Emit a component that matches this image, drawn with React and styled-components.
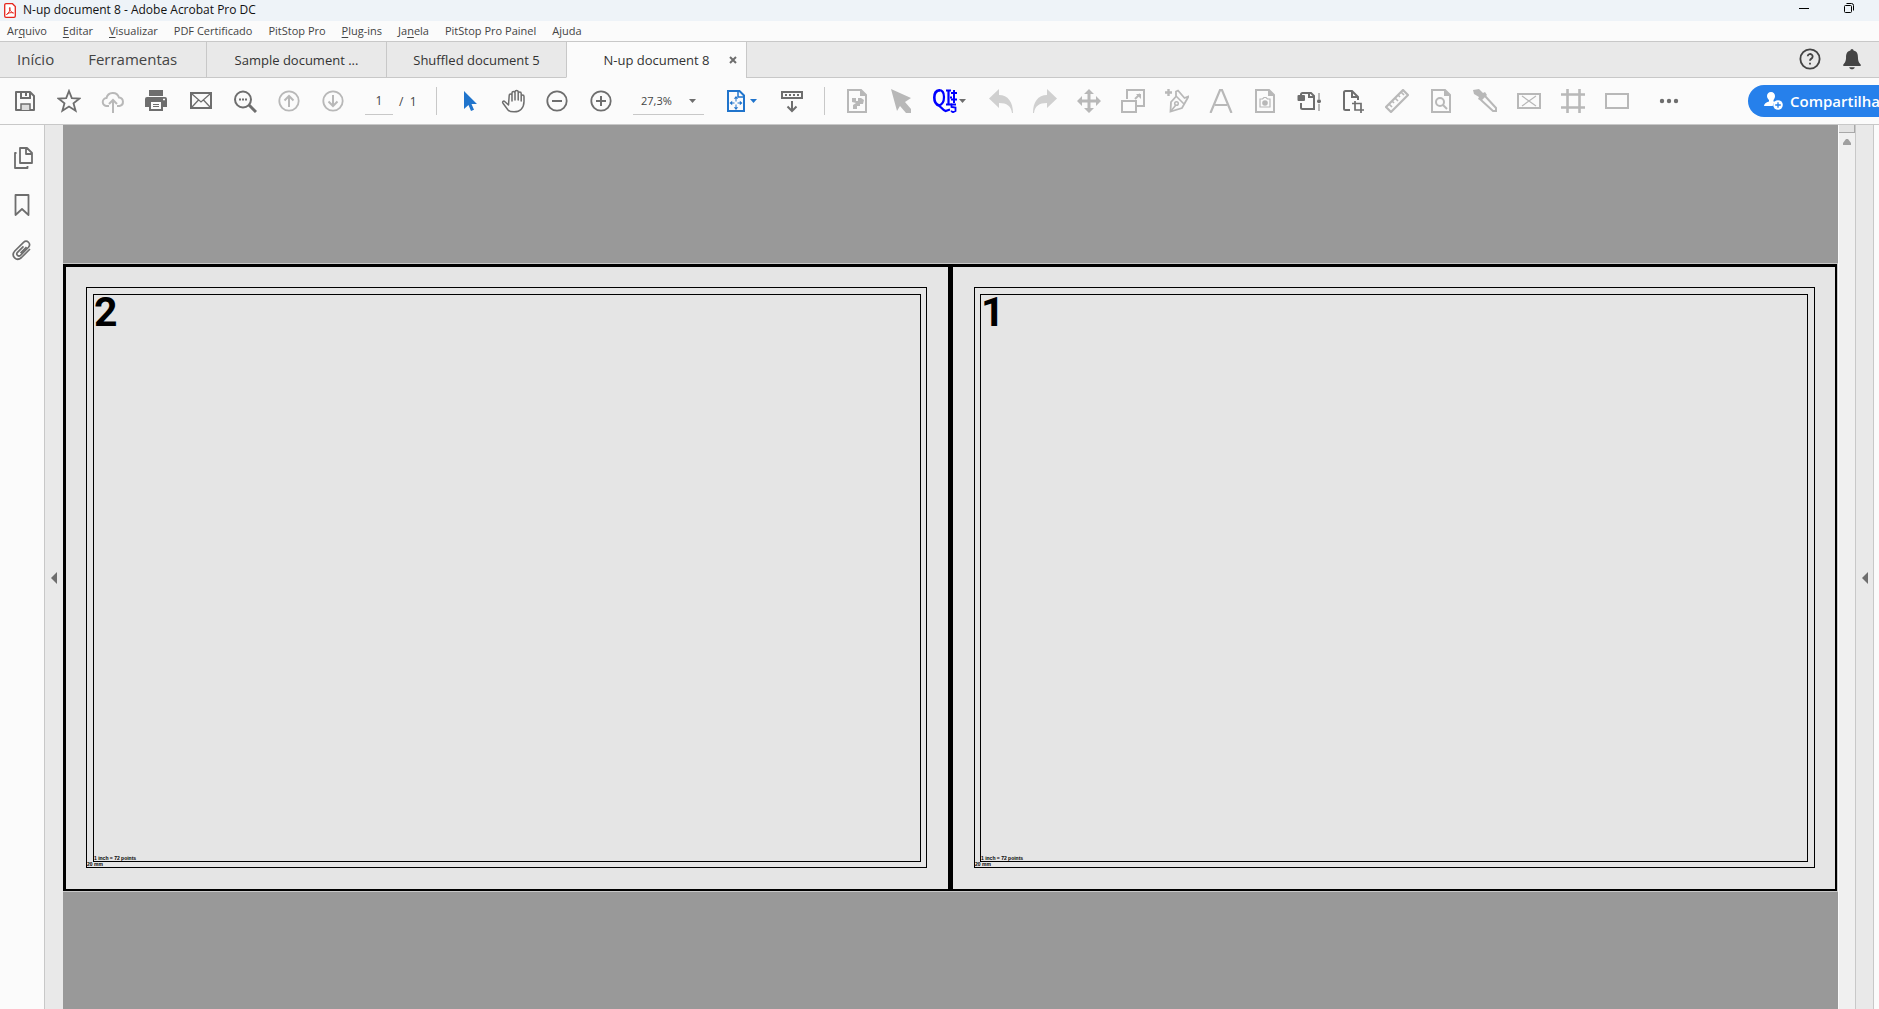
import React from 'react';
import styled, { createGlobalStyle } from 'styled-components';

const DARK = '#6e6e6e';
const LIGHT = '#b8b8b8';
const PALE = '#d0d0d0';
const BLUE = '#2074cc';
const LINE = '#c8c8c8';
const SURFACE = '#fbfbfb';
const MUTED = '#e9e9e9';

const GlobalStyle = createGlobalStyle`
  * { box-sizing: border-box; }
  body { margin: 0; overflow: hidden; }
  button, input, select {
    font: inherit; color: inherit; background: none; border: 0; padding: 0; margin: 0;
  }
`;

const Window = styled.div`
  display: flex;
  flex-direction: column;
  height: 100vh;
  overflow: hidden;
  background: ${SURFACE};
  color: #444;
  font-family: "Open Sans", "Noto Sans", sans-serif;
  font-size: 12px;
`;

const TitleBar = styled.header`
  display: flex;
  align-items: center;
  flex: none;
  height: 21px;
  padding-left: 4px;
  gap: 7px;
  background: #eef3f8;
  color: #111;
`;

const TitleText = styled.h1`
  flex: 1;
  margin: 0;
  font-size: 12px;
  font-weight: 400;
  line-height: 18px;
  padding-bottom: 2px;
`;

const WindowControls = styled.div`
  display: flex;
  width: 98px;
  height: 21px;
`;

const WindowButton = styled.button`
  display: flex;
  justify-content: center;
  align-items: center;
  flex: none;
  width: 45px;
  padding-bottom: 5px;
`;

const MenuBar = styled.nav`
  display: flex;
  align-items: center;
  flex: none;
  height: 20px;
  padding: 0 7px;
  gap: 16px;
  font-size: 11px;
  line-height: 18px;
  white-space: nowrap;
  u { text-underline-offset: 2px; }
`;

const TabBar = styled.div`
  display: flex;
  flex: none;
  height: 37px;
  background: ${MUTED};
  border-top: 1px solid ${LINE};
`;

const HomeTabs = styled.div`
  display: flex;
  align-items: center;
  gap: 34px;
  width: 206px;
  padding: 0 0 2px 17px;
  font-size: 15px;
  border-bottom: 1px solid ${LINE};
`;

const Tab = styled.div`
  display: grid;
  grid-template-columns: 25px 1fr 25px;
  align-items: center;
  width: 180px;
  border-left: 1px solid ${LINE};
  border-bottom: 1px solid ${(p) => (p.$active ? SURFACE : LINE)};
  background: ${(p) => (p.$active ? SURFACE : MUTED)};
  color: #333;
  font-size: 13px;
`;

const TabLabel = styled.button`
  grid-column: 2;
  white-space: nowrap;
`;

const TabClose = styled.button`
  display: flex;
  justify-content: flex-end;
  padding-right: 9px;
`;

const TabTools = styled.div`
  display: flex;
  flex: 1;
  justify-content: flex-end;
  align-items: center;
  gap: 20px;
  padding: 0 16px 2px 0;
  border-left: 1px solid ${LINE};
  border-bottom: 1px solid ${LINE};
`;

const PlainButton = styled.button`
  display: flex;
`;

const Toolbar = styled.div`
  display: flex;
  align-items: center;
  flex: none;
  height: 47px;
  padding-left: 3px;
  border-bottom: 1px solid ${LINE};
`;

const ToolButton = styled.button`
  display: flex;
  align-items: center;
  justify-content: center;
  flex: none;
  width: 44px;
  height: 40px;
  color: ${(p) => p.$color || DARK};
`;

const MenuToolButton = styled(ToolButton)`
  justify-content: flex-start;
  gap: 2px;
  width: 56px;
  padding-left: 10px;
`;

const PageBox = styled.label`
  display: flex;
  align-items: center;
  gap: 6px;
  width: 81px;
  padding-left: 10px;
  white-space: pre;
`;

const PageInput = styled.input`
  width: 28px;
  height: 28px;
  border-bottom: 1px solid ${LINE};
  text-align: center;
`;

const Divider = styled.div`
  flex: none;
  width: 1px;
  height: 28px;
  margin: 0 10px 0 ${(p) => (p.$spaced ? 10 : 0)}px;
  background: ${LINE};
`;

const ZoomField = styled.div`
  display: grid;
  align-items: center;
  width: 71px;
  height: 28px;
  margin: 0 10px;
  border-bottom: 1px solid ${LINE};
  svg { grid-area: 1 / 1; justify-self: end; margin-right: 8px; }
`;

const ZoomSelect = styled.select`
  grid-area: 1 / 1;
  appearance: none;
  width: 71px;
  height: 26px;
  padding-left: 8px;
  font-size: 11px;
`;

const MoreButton = styled(ToolButton)`
  width: 60px;
`;

const ShareSlot = styled.div`
  width: 131px;
  margin-left: auto;
`;

const ShareButton = styled.button`
  display: flex;
  align-items: center;
  gap: 7px;
  width: 156px;
  height: 32px;
  padding-left: 16px;
  border-radius: 16px;
  background: #2680eb;
  color: #fff;
  font-size: 15px;
  font-weight: 600;
  line-height: 30px;
`;

const Workspace = styled.main`
  display: flex;
  flex: 1;
  min-height: 0;
`;

const Sidebar = styled.aside`
  display: flex;
  flex-direction: column;
  width: 45px;
  padding-top: 10px;
  border-right: 1px solid ${LINE};
  background: ${SURFACE};
`;

const SideButton = styled.button`
  display: flex;
  align-items: center;
  justify-content: center;
  height: 46px;
  color: ${DARK};
`;

const Splitter = styled.button`
  display: flex;
  align-items: center;
  justify-content: center;
  flex: none;
  width: 18px;
  padding-top: 21px;
  background: ${MUTED};
  border-right: ${(p) => (p.$edge ? `1px solid ${LINE}` : '0')};
`;

const Canvas = styled.section`
  display: flex;
  align-items: center;
  flex: 1;
  min-width: 0;
  padding: 21px 1px 0 0;
  overflow: hidden;
  background: #999;
`;

const Spread = styled.div`
  display: grid;
  grid-template-columns: 1fr 1fr;
  gap: 5px;
  width: 100%;
  aspect-ratio: 1774 / 627;
  border: solid #000;
  border-width: 3px 2px 2px 3px;
  background: #000;
  box-shadow: 0 0 0 1px #c8c8c8;
  color: #000;
  font-family: "Liberation Sans", Arial, sans-serif;
  font-weight: 700;
`;

const Sheet = styled.article`
  display: flex;
  padding: ${(p) => (p.$right ? '20px 20px 21px 21px' : '20px 21px 21px 20px')};
  background: #e5e5e5;
`;

const OuterFrame = styled.div`
  display: flex;
  flex-direction: column;
  flex: 1;
  padding-top: 6px;
  border: 1px solid #000;
`;

const InnerFrame = styled.div`
  display: flex;
  flex-direction: column;
  justify-content: space-between;
  flex: 1;
  margin: ${(p) => (p.$right ? '0 6px 0 5px' : '0 5px 0 6px')};
  border: 1px solid #000;
`;

const SheetNumber = styled.div`
  font-family: Roboto, "Liberation Sans", sans-serif;
  font-size: 41px;
  line-height: 35px;
`;

const Measure = styled.div`
  font-size: 5px;
  line-height: 5px;
`;

const ScrollTrack = styled.div`
  display: flex;
  flex-direction: column;
  align-items: center;
  gap: 6px;
  flex: none;
  width: 18px;
  background: #f0f0f0;
  border-left: 1px solid #fafafa;
  border-right: 1px solid ${LINE};
`;

const ScrollStub = styled.div`
  width: 100%;
  height: 8px;
  background: #e3e3e3;
  border-right: 1px solid #a8a8a8;
  border-bottom: 1px solid #a8a8a8;
`;

const RightEdge = styled.div`
  flex: none;
  width: 5px;
  background: ${SURFACE};
`;

const Icon = ({ children, size = 24, w = 2 }) => (
  <svg width={size} height={size} viewBox="0 0 24 24" fill="none" stroke="currentColor" strokeWidth={w} aria-hidden="true">
    {children}
  </svg>
);

const Caret = ({ color = DARK }) => (
  <svg width="7" height="4" viewBox="0 0 7 4" fill={color} aria-hidden="true">
    <path d="M0 0h7L3.500 4z" />
  </svg>
);

const LeftTriangle = () => (
  <svg width="6" height="12" viewBox="0 0 6 12" fill={DARK} aria-hidden="true">
    <path d="M6 0v12L0 6z" />
  </svg>
);

const pageOutline = <path d="M3 1h13l5 5v17H3z" />;
const pageFold = <path d="M16 1v5h5" fill="currentColor" />;

const icons = {
  save: (
    <>
      <path d="M3 3h14l4 4v14H3z" strokeLinejoin="round" />
      <path d="M8 3v6h9V3M13 4v3" />
      <path d="M8 21v-6h9v6" fill="#dcdcdc" strokeWidth="1.500" />
    </>
  ),
  star: <path d="M12 2l2.800 7.200 7.700.300-6 4.800 2.100 7.500L12 17.500l-6.600 4.300 2.100-7.500-6-4.800 7.700-.300z" strokeWidth="1.800" />,
  cloud: (
    <>
      <path d="M8 17H6a4 4 0 0 1-.500-8A6.500 6.500 0 0 1 18 8.500 4.300 4.300 0 0 1 18.500 17H16" />
      <path d="M12 24V11M8 15l4-4 4 4" />
    </>
  ),
  print: (
    <>
      <path d="M4 1h14v6H4z" fill="currentColor" stroke="none" />
      <path d="M2 8h18a2 2 0 0 1 2 2v8h-4v4H4v-4H0v-8a2 2 0 0 1 2-2z" fill="currentColor" stroke="none" />
      <path d="M4 7.500h14" stroke="#fbfbfb" strokeWidth="1" />
      <path d="M6 13h10v7H6z" fill="#fbfbfb" stroke="none" />
      <path d="M8 15.500h6M8 17.500h6" strokeWidth="1" />
      <path d="M18 10.500h2" stroke="#fbfbfb" strokeWidth="1.500" />
    </>
  ),
  mail: (
    <>
      <path d="M2 4h20v15H2z" />
      <path d="M3 5l9 8 9-8M3 18l6.500-7M21 18l-6.500-7" strokeWidth="1.300" />
    </>
  ),
  find: (
    <>
      <circle cx="10" cy="10.500" r="8" />
      <path d="M16 16l7 7" strokeWidth="3" />
      <path d="M6 9.500h2v2H6zM9 9.500h2v2H9zM12 9.500h2v2h-2z" fill="currentColor" stroke="none" />
    </>
  ),
  up: (
    <>
      <circle cx="12" cy="12" r="9.700" strokeWidth="1.800" />
      <path d="M12 18V7M7.500 11.500L12 7l4.500 4.500" />
    </>
  ),
  down: (
    <>
      <circle cx="12" cy="12" r="9.700" strokeWidth="1.800" />
      <path d="M12 6v11M7.500 12.500L12 17l4.500-4.500" />
    </>
  ),
  select: <path d="M7 2v18l4.500-4 2.500 6 3-1.300-2.500-5.700H20z" fill="currentColor" stroke="none" />,
  hand: (
    <path
      d="M6.500 16L3 12.700c-1.500-1.300-3 0-2 1.500l5 6.800c2 2.300 10 2.700 13-.500 2-2 3-5 3-8V7.500c0-2-2.800-2-2.800 0V12 4.500c0-2-3-2-3 0V11 3c0-2-3.200-2-3.200 0v8V4c0-2-3-2-3 0v8V6.500c0-2-2.800-2-2.800 0z"
      transform="translate(1 0)"
      strokeWidth="1.500"
      strokeLinejoin="round"
    />
  ),
  minus: (
    <>
      <circle cx="12" cy="12" r="9.700" strokeWidth="1.800" />
      <path d="M7 12h10" />
    </>
  ),
  plus: (
    <>
      <circle cx="12" cy="12" r="9.700" strokeWidth="1.800" />
      <path d="M7 12h10M12 7v10" />
    </>
  ),
  fit: (
    <>
      <path d="M4 2h11.500L20 6.500V22H4z" />
      <path d="M14 2v6h6" strokeWidth="1.500" />
      <path d="M12 9.500v3M12 15.500v3M7 14h3.500M13.500 14H17" strokeWidth="1" />
      <path d="M12 7l2.200 2.700H9.800zM12 21l2.200-2.700H9.800zM5.500 14l2.700-2.200v4.400zM18.500 14l-2.700-2.200v4.400z" fill="currentColor" stroke="none" />
    </>
  ),
  scrollMode: (
    <>
      <path d="M2 3h20v6H2z" />
      <path d="M5 6h14" strokeDasharray="2 2" />
      <path d="M12 12v10M7.500 17.500L12 22l4.500-4.500" />
    </>
  ),
  imagePage: (
    <>
      {pageOutline}
      {pageFold}
      <path d="M7 9h4v3h2V9h3l3 2-1 4h-3v2h-3v3H8v-4l3-2-4-1z" fill="currentColor" stroke="none" />
    </>
  ),
  editCursor: <path d="M2 0l20 9-6 4 6 7v4h-5l-6-7-3 5z" fill="currentColor" stroke="none" />,
  undo: <path d="M0 9.500L10 0v6c9 0 14 7 14 18h-1c-1-7-5-10-13-10v5z" fill="currentColor" stroke="none" />,
  redo: <path d="M24 9.500L14 0v6C5 6 0 13 0 24h1c1-7 5-10 13-10v5z" fill="currentColor" stroke="none" />,
  move: (
    <>
      <path d="M12 3v18M3 12h18" strokeWidth="3" />
      <path d="M12 0l5 5H7zM12 24l5-5H7zM0 12l5-5v10zM24 12l-5-5v10z" fill="currentColor" stroke="none" />
    </>
  ),
  resize: (
    <>
      <path d="M6 10V1h17v16h-8M1 12h14v11H1z" />
      <path d="M15 5h5v5z" fill="currentColor" stroke="none" />
      <path d="M14 10l5-5" />
    </>
  ),
  pen: (
    <>
      <path d="M3.500 0v7M0 3.500h7" strokeWidth="2.400" />
      <path d="M5.500 22.500L6 13l5-5.500V2.500L13 1.500l6.500 7.500 4-1.500L17 19z" strokeWidth="1.800" />
      <path d="M11 7l8 8M5.500 22.500l5-6" strokeWidth="1.600" />
      <circle cx="11.500" cy="14.500" r="1.800" strokeWidth="1.500" />
    </>
  ),
  type: <path d="M1.500 24L11 1.200h2L22.500 24M6 16h12" strokeWidth="2.200" />,
  camera: (
    <>
      {pageOutline}
      {pageFold}
      <path d="M7 10h2.500L11 8.500h2L14.500 10H17v8H7z" strokeWidth="1.200" />
      <circle cx="12" cy="14" r="2.800" fill="currentColor" stroke="none" />
    </>
  ),
  slider: (
    <>
      <path d="M4 8V5.500A1.500 1.500 0 0 1 5.500 4H14l3 3v13H5.500A1.500 1.500 0 0 1 4 18.500V14M12 4v4h5" />
      <path d="M1.500 7H7v4H1.500z" fill="currentColor" strokeLinejoin="round" />
      <path d="M22 4v6M22 15v7" stroke={LIGHT} />
      <circle cx="22" cy="12.300" r="2" fill="currentColor" stroke="none" />
    </>
  ),
  cropPage: (
    <>
      <path d="M9 21H4.500A1.500 1.500 0 0 1 3 19.500v-16A1.500 1.500 0 0 1 4.500 2H11l6 6v3M11 2v6h6" />
      <path d="M14 12v9h9M11 14.500h9V24" strokeWidth="1.700" />
    </>
  ),
  ruler: (
    <>
      <path d="M18 1l5 5L6 23l-5-5z" strokeLinejoin="round" strokeWidth="2.200" />
      <path d="M4 15l3 3M7 12l2 2M10 9l3 3M13 6l2 2M16 3l3 3" strokeWidth="1.700" />
    </>
  ),
  findPage: (
    <>
      {pageOutline}
      {pageFold}
      <circle cx="11" cy="13" r="4" />
      <path d="M14 16l4 4" />
    </>
  ),
  dropper: (
    <>
      <path d="M0 1l6-1 4 4 2-1 2 3-6 6-3-2 1-2-5-3z" fill="currentColor" stroke="none" />
      <path d="M8 11L20 22h3v-3L12 7" />
    </>
  ),
  crossBox: (
    <>
      <path d="M1 5h22v14H1z" />
      <path d="M5 7l14 10M19 7L5 17" strokeWidth="1.200" />
    </>
  ),
  grid: <path d="M6.500 0v24M18.500 0v24M0 5.500h24M0 18.500h24" strokeWidth="2.600" />,
  box: <path d="M1 5h22v14H1z" />,
  more: (
    <g fill="currentColor" stroke="none">
      <circle cx="5" cy="12" r="2.200" />
      <circle cx="12" cy="12" r="2.200" />
      <circle cx="19" cy="12" r="2.200" />
    </g>
  ),
  help: (
    <>
      <circle cx="12" cy="12" r="10.500" />
      <path d="M9.500 9a2.700 2.700 0 1 1 4 2.600c-1 .600-1.500 1-1.500 2.400M12 16v2" />
    </>
  ),
  bell: (
    <>
      <path d="M12 1c1 0 1.700.800 1.700 1.700C18 3.800 18.500 7 18.500 10c0 5 1.500 6 3 8v1.500h-19V18c1.500-2 3-3 3-8 0-3 .500-6.200 4.800-7.300C10.300 1.800 11 1 12 1z" fill="currentColor" stroke="none" />
      <path d="M9 21h6c-.500 3-5.500 3-6 0z" fill="currentColor" stroke="none" />
    </>
  ),
  pages: (
    <>
      <path d="M10 2h7l5 5v10H10zM16 2v6h6" strokeWidth="1.800" strokeLinejoin="round" />
      <path d="M6.500 7H5v15h12.500v-2" strokeWidth="1.800" strokeLinejoin="round" />
    </>
  ),
  bookmark: <path d="M5.500 3h13v20L12 17l-6.500 6z" strokeWidth="1.800" strokeLinejoin="round" />,
  clip: (
    <path
      d="M20 11l-8.500 8.500c-5 4.500-11-1.500-6.700-6.500l8.700-8.700c3.500-3 8 1.200 5 5l-8 8c-2 1.800-5-.700-3-3l6-6M10.500 15l6-6"
      strokeWidth="1.700"
    />
  ),
};

const menus = [
  ['Ar', 'q', 'uivo'],
  ['', 'E', 'ditar'],
  ['', 'V', 'isualizar'],
  ['PDF Certificado'],
  ['PitStop Pro'],
  ['', 'P', 'lug-ins'],
  ['Ja', 'n', 'ela'],
  ['PitStop Pro Painel'],
  ['Ajuda'],
];

const fileTools = [
  ['save', 'Salvar'],
  ['star', 'Favorito'],
  ['cloud', 'Enviar', LIGHT],
  ['print', 'Imprimir'],
  ['mail', 'E-mail'],
  ['find', 'Localizar'],
  ['up', 'Página anterior', LIGHT],
  ['down', 'Próxima página', LIGHT],
];

const viewTools = [
  ['select', 'Selecionar', BLUE],
  ['hand', 'Mão'],
  ['minus', 'Menos zoom'],
  ['plus', 'Mais zoom'],
];

const scrollTools = [['scrollMode', 'Rolagem']];

const objectTools = [
  ['imagePage', 'Página de imagem', LIGHT],
  ['editCursor', 'Editar objeto', LIGHT],
];

const editTools = [
  ['undo', 'Desfazer', PALE],
  ['redo', 'Refazer', PALE],
  ['move', 'Mover', LIGHT],
  ['resize', 'Redimensionar', LIGHT],
  ['pen', 'Caneta', LIGHT],
  ['type', 'Texto', LIGHT],
  ['camera', 'Instantâneo', LIGHT],
  ['slider', 'Ação global'],
  ['cropPage', 'Cortar página'],
  ['ruler', 'Medir', LIGHT],
  ['findPage', 'Inspecionar', LIGHT],
  ['dropper', 'Conta-gotas', LIGHT],
  ['crossBox', 'Caixa de imagem', LIGHT],
  ['grid', 'Grade', LIGHT],
  ['box', 'Retângulo', LIGHT],
];

const Tools = ({ items }) =>
  items.map(([name, label, color]) => (
    <ToolButton key={name} $color={color} aria-label={label}>
      <Icon>{icons[name]}</Icon>
    </ToolButton>
  ));

const ImposingLogo = () => (
  <svg width="24" height="24" viewBox="0 0 24 24" fill="none" stroke="#00f" aria-hidden="true">
    <path d="M7 1.200C2.500 1.500 1.300 4.500 1.300 8.500S3 15.500 6 16.500" strokeWidth="2.600" />
    <path d="M6 1.200c3.500 0 5 2.500 5 6.800 0 4.500-1.500 7.500-5 8.500" strokeWidth="2.200" />
    <path d="M3.500 16c3-1 5 4.500 9 6l4.500-1.500" strokeWidth="2.200" />
    <path d="M13 1.500h5M15.500 2v14M13 15.500h6M17 8.500h2" strokeWidth="2.200" />
    <path d="M21 1v13M18 4h6M18 10.500h6" strokeWidth="2" />
    <path d="M23 15.500h-4.500V18l4 .500V22l-2.500 1.200L18 22" strokeWidth="1.800" />
  </svg>
);

const SheetPage = ({ number, right }) => (
  <Sheet $right={right}>
    <OuterFrame>
      <InnerFrame $right={right}>
        <SheetNumber>{number}</SheetNumber>
        <Measure>1 inch = 72 points</Measure>
      </InnerFrame>
      <Measure>20 mm</Measure>
    </OuterFrame>
  </Sheet>
);

export default function App() {
  return (
    <Window>
      <GlobalStyle />
      <TitleBar>
        <svg width="12" height="15" viewBox="0 0 12 15" fill="#fff" stroke="#e5251d" aria-hidden="true">
          <path d="M2 .700h6.500L11.300 3.500V13a1.300 1.300 0 0 1-1.300 1.300H2A1.300 1.300 0 0 1 .700 13V2A1.300 1.300 0 0 1 2 .700z" strokeWidth="1.300" />
          <path d="M2.500 11.500C5 10 6.500 7 6 4.500c-1.300 0-.500 4 3.500 5.500-2.500-.800-5-.300-7 1.500z" />
        </svg>
        <TitleText>N-up document 8 - Adobe Acrobat Pro DC</TitleText>
        <WindowControls>
          <WindowButton aria-label="Minimizar">
            <svg width="10" height="10" viewBox="0 0 10 10" stroke="#000"><path d="M0 5.500h10" /></svg>
          </WindowButton>
          <WindowButton aria-label="Restaurar">
            <svg width="10" height="10" viewBox="0 0 10 10" fill="none" stroke="#000">
              <rect x=".500" y="2.500" width="7" height="7" rx="1" />
              <path d="M2.500.500H7.500a2 2 0 0 1 2 2V7.500" />
            </svg>
          </WindowButton>
        </WindowControls>
      </TitleBar>

      <MenuBar>
        {menus.map(([before, key, after]) => (
          <button key={before + key}>
            {before}
            {key && <u>{key}</u>}
            {after}
          </button>
        ))}
      </MenuBar>

      <TabBar>
        <HomeTabs>
          <button>Início</button>
          <button>Ferramentas</button>
        </HomeTabs>
        <Tab><TabLabel>Sample document ...</TabLabel></Tab>
        <Tab><TabLabel>Shuffled document 5</TabLabel></Tab>
        <Tab $active>
          <TabLabel>N-up document 8</TabLabel>
          <TabClose aria-label="Fechar">
            <svg width="8" height="8" viewBox="0 0 8 8" stroke={DARK} strokeWidth="2"><path d="M1 1l6 6M7 1L1 7" /></svg>
          </TabClose>
        </Tab>
        <TabTools>
          <PlainButton aria-label="Ajuda"><Icon size={22}>{icons.help}</Icon></PlainButton>
          <PlainButton aria-label="Notificações"><Icon size={22}>{icons.bell}</Icon></PlainButton>
        </TabTools>
      </TabBar>

      <Toolbar>
        <Tools items={fileTools} />
        <PageBox>
          <PageInput defaultValue="1" aria-label="Página" />
          <span>/  1</span>
        </PageBox>
        <Divider />
        <Tools items={viewTools} />
        <ZoomField>
          <ZoomSelect aria-label="Zoom" defaultValue="27,3%">
            <option>27,3%</option>
          </ZoomSelect>
          <Caret />
        </ZoomField>
        <MenuToolButton $color={BLUE} aria-label="Ajustar página">
          <Icon>{icons.fit}</Icon>
          <Caret color={BLUE} />
        </MenuToolButton>
        <Tools items={scrollTools} />
        <Divider $spaced />
        <Tools items={objectTools} />
        <MenuToolButton aria-label="Quite Imposing">
          <ImposingLogo />
          <Caret />
        </MenuToolButton>
        <Tools items={editTools} />
        <MoreButton aria-label="Mais ferramentas">
          <Icon>{icons.more}</Icon>
        </MoreButton>
        <ShareSlot>
          <ShareButton>
            <svg width="19" height="18" viewBox="0 0 19 18" fill="#fff" aria-hidden="true">
              <path d="M7 0c2.500 0 4 1.800 4 4 0 1.800-.800 3-1.500 4v1.500L11 10a5.500 5.500 0 0 0-2.300 4H0c0-2.500 2-3.500 5-4.500V8C4 7 3 5.800 3 4c0-2.200 1.500-4 4-4z" />
              <circle cx="14" cy="13" r="4.800" />
              <path d="M14 10.200v5.600M11.200 13h5.600" stroke="#2680eb" strokeWidth="1.300" />
            </svg>
            Compartilhar
          </ShareButton>
        </ShareSlot>
      </Toolbar>

      <Workspace>
        <Sidebar>
          <SideButton aria-label="Miniaturas"><Icon>{icons.pages}</Icon></SideButton>
          <SideButton aria-label="Marcadores"><Icon>{icons.bookmark}</Icon></SideButton>
          <SideButton aria-label="Anexos"><Icon>{icons.clip}</Icon></SideButton>
        </Sidebar>
        <Splitter aria-label="Recolher painel esquerdo"><LeftTriangle /></Splitter>
        <Canvas>
          <Spread>
            <SheetPage number="2" />
            <SheetPage number="1" right />
          </Spread>
        </Canvas>
        <ScrollTrack>
          <ScrollStub />
          <svg width="8" height="6" viewBox="0 0 8 6" fill="#a0a0a0" aria-hidden="true"><path d="M3 0h2l3 4v2H0V4z" /></svg>
        </ScrollTrack>
        <Splitter $edge aria-label="Expandir painel direito"><LeftTriangle /></Splitter>
        <RightEdge />
      </Workspace>
    </Window>
  );
}
